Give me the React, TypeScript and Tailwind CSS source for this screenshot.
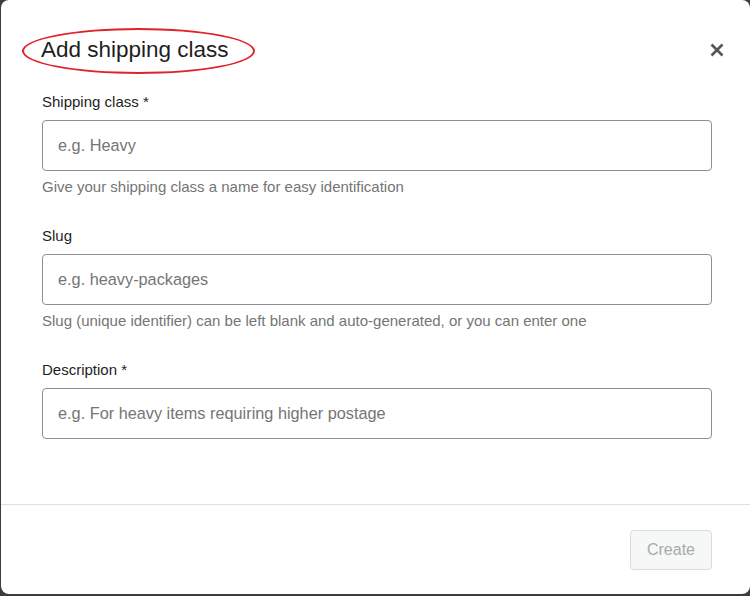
import React from "react";

const font = { fontFamily: '"Liberation Sans", Arial, sans-serif' };

function Field({ label, placeholder, help }: { label: string; placeholder: string; help?: string }) {
  return (
    <div className="flex flex-col">
      <label className="text-[15px] leading-[20px] text-[#1e1e1e]">{label}</label>
      <input
        placeholder={placeholder}
        className="mt-[8px] h-[51px] w-full rounded-[4px] border border-[#8c8f94] bg-white px-[15px] text-[16.3px] text-[#1e1e1e] placeholder:text-[#757575] outline-none"
        style={font}
      />
      {help ? <p className="mt-[6px] text-[15px] leading-[20px] text-[#757575]">{help}</p> : null}
    </div>
  );
}

export default function App() {
  return (
    <div className="h-[596px] w-[750px] overflow-hidden bg-[#3c3c3c]" style={font}>
      <div className="relative ml-[1px] flex h-[594px] w-[749px] flex-col rounded-[8px] bg-white">
        <div className="flex items-center justify-between pl-[40px] pr-[21px] pt-[34px]">
          <h1 className="text-[22.5px] leading-[32px] font-normal text-[#1e1e1e]">Add shipping class</h1>
          <button className="flex h-[24px] w-[24px] items-center justify-center" aria-label="Close">
            <svg width="14" height="14" viewBox="0 0 14 14">
              <path d="M1.5 1.5 L12.5 12.5 M12.5 1.5 L1.5 12.5" stroke="#555" strokeWidth="2.6" strokeLinecap="butt" />
            </svg>
          </button>
        </div>
        <div className="pointer-events-none absolute left-[21px] top-[28px] h-[46px] w-[233px] rounded-[50%] border-2 border-[#e0222a]" />
        <div className="flex flex-col gap-[29px] pl-[41px] pr-[38px] pt-[26px]">
          <Field label="Shipping class *" placeholder="e.g. Heavy" help="Give your shipping class a name for easy identification" />
          <Field
            label="Slug"
            placeholder="e.g. heavy-packages"
            help="Slug (unique identifier) can be left blank and auto-generated, or you can enter one"
          />
          <Field label="Description *" placeholder="e.g. For heavy items requiring higher postage" />
        </div>
        <div className="mt-auto border-t border-[#e0e0e0] pb-[24px] pr-[38px] pt-[25px]">
          <div className="flex justify-end">
            <button
              disabled
              className="h-[40px] w-[82px] rounded-[4px] border border-[#dcdcde] bg-[#f6f7f7] text-[16px] text-[#a7aaad]"
              style={font}
            >
              Create
            </button>
          </div>
        </div>
      </div>
    </div>
  );
}
